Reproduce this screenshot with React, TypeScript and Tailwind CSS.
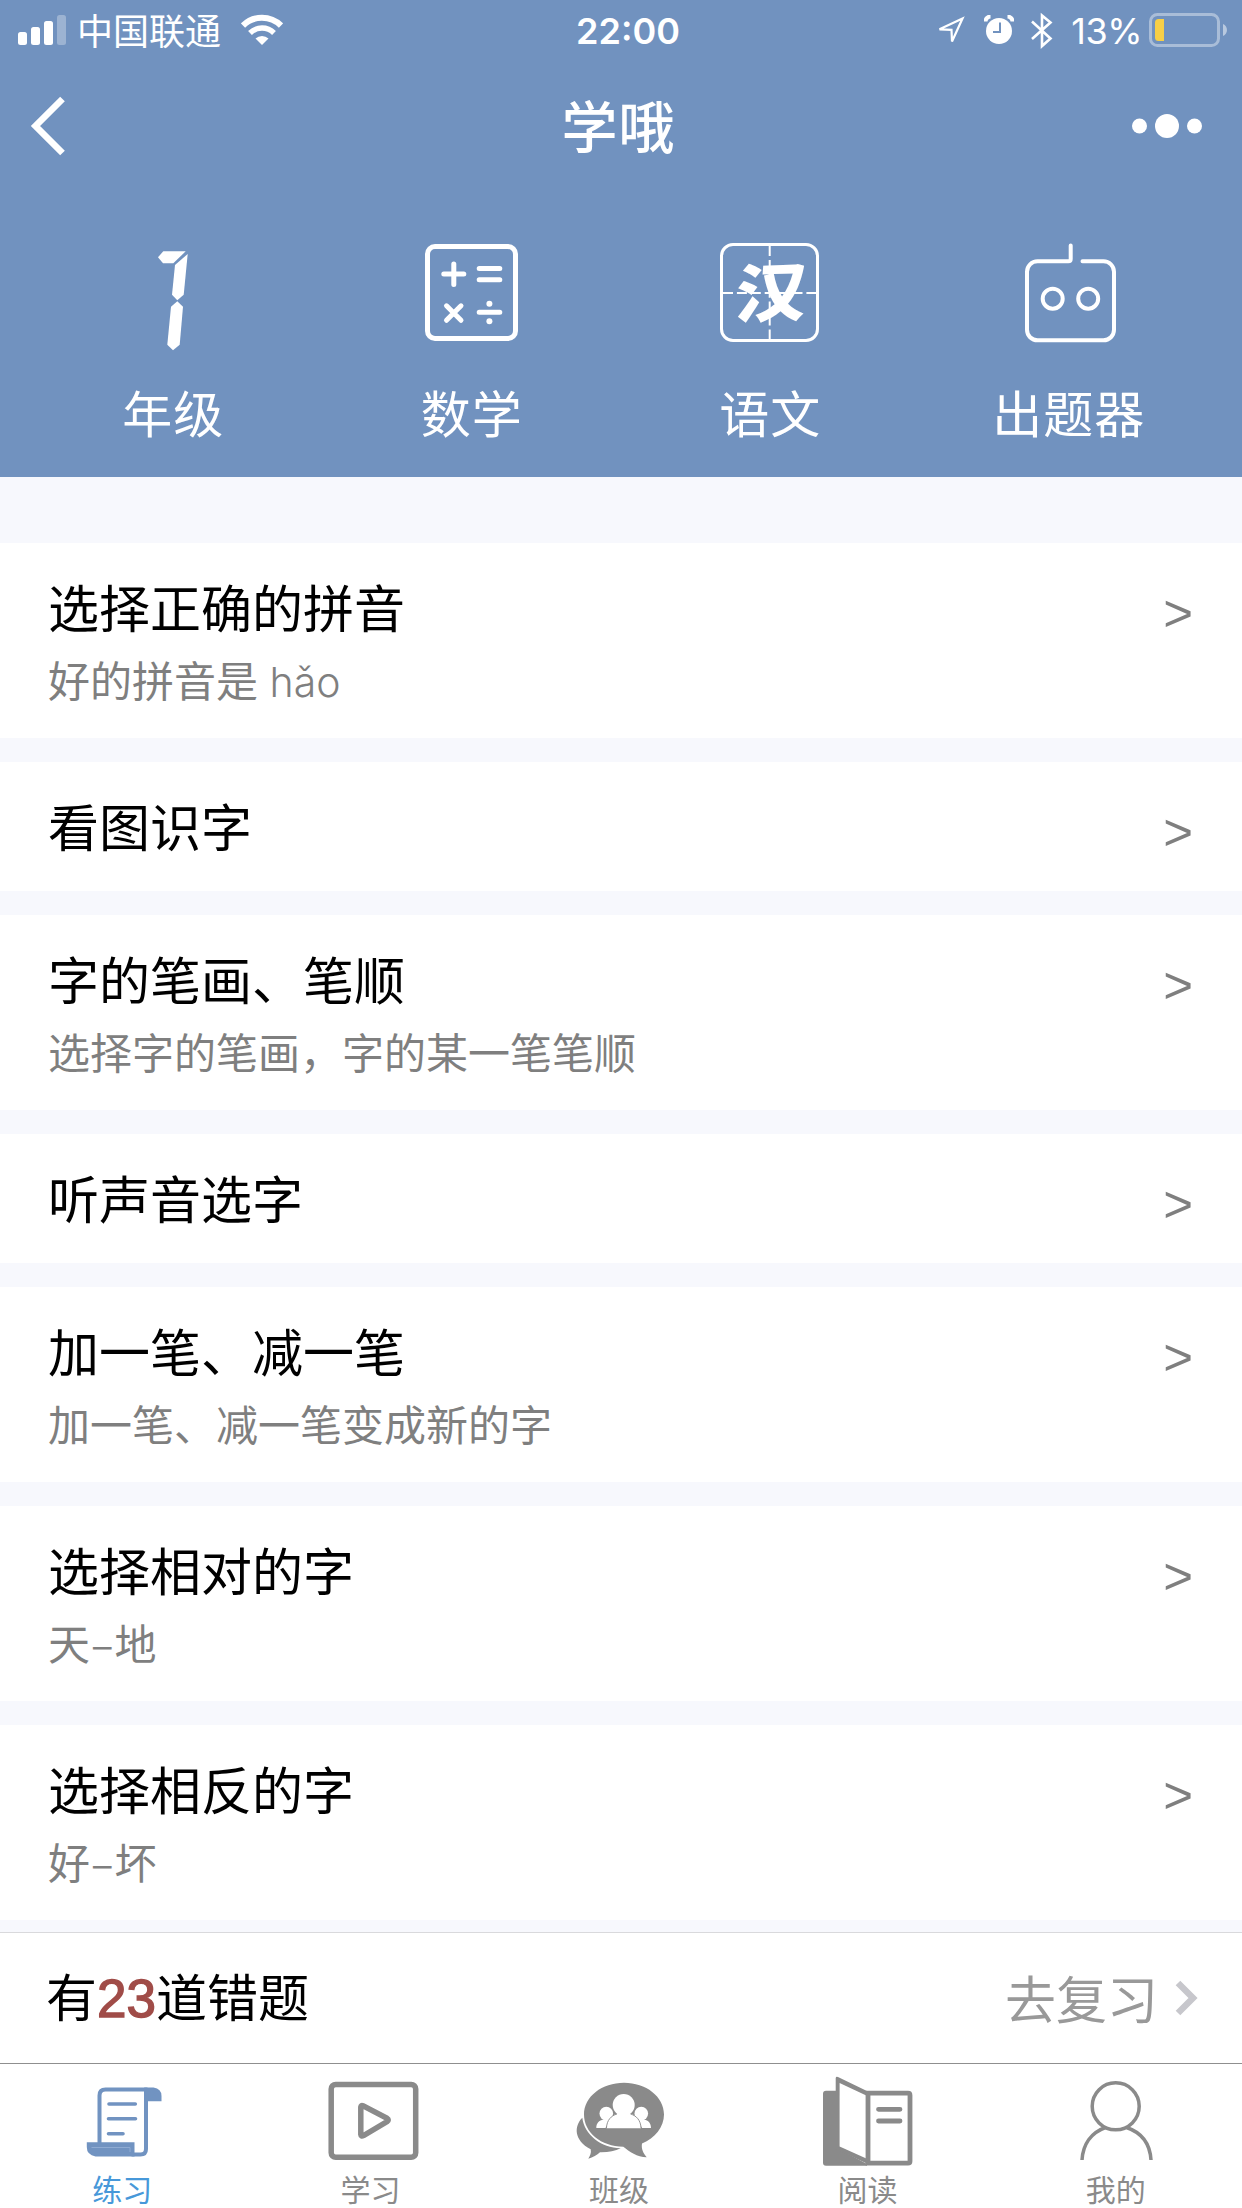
import type { ReactNode } from 'react';

type Exercise = { title: string; desc?: ReactNode };

const exercises: Exercise[] = [
  {
    title: '选择正确的拼音',
    desc: (
      <>
        好的拼音是<span className="font-['Inter'] text-[41px] font-light"> hǎo</span>
      </>
    ),
  },
  { title: '看图识字' },
  { title: '字的笔画、笔顺', desc: '选择字的笔画，字的某一笔笔顺' },
  { title: '听声音选字' },
  { title: '加一笔、减一笔', desc: '加一笔、减一笔变成新的字' },
  { title: '选择相对的字', desc: <>天<span className="px-px">–</span>地</> },
  { title: '选择相反的字', desc: <>好<span className="px-px">–</span>坏</> },
];

function StatusBar() {
  return (
    <div className="grid h-[60px] grid-cols-3">
      <div className="flex items-start pl-[18px]">
        <svg className="mt-[15px] h-[30px] w-12" viewBox="0 0 48 30" fill="#fff">
          <rect x="0" y="17" width="9" height="13" rx="2.5" />
          <rect x="13" y="12" width="9" height="18" rx="2.5" />
          <rect x="26" y="6" width="9" height="24" rx="2.5" />
          <rect x="39" y="0" width="9" height="30" rx="2.5" opacity="0.3" />
        </svg>
        <span className="ml-[11px] mt-1 text-[36px] leading-[50px]">中国联通</span>
        <svg className="ml-5 mt-[14px] h-8 w-[42px]" viewBox="0 0 42 32">
          <path d="M2 11.5a27 27 0 0 1 38 0" fill="none" stroke="#fff" strokeWidth="6" />
          <path d="M9 19a17 17 0 0 1 24 0" fill="none" stroke="#fff" strokeWidth="5.4" />
          <path d="M14.5 24.5a9.5 9.5 0 0 1 13 0L21 31z" fill="#fff" />
        </svg>
      </div>
      <div className="pl-[14px] pt-1.5 text-center font-['Inter'] text-[36px] font-semibold leading-[50px]">22:00</div>
      <div className="flex items-start justify-end pr-[14px]">
        <svg className="mt-[15px] h-8 w-[30px]" viewBox="0 0 30 32" fill="none" stroke="#fff" strokeWidth="2.2">
          <path d="M3.500 14.300L26.500 3.500L16 26.500L15.500 14.800z" />
        </svg>
        <svg className="ml-[18px] mt-[15px] h-[30px] w-[30px]" viewBox="0 0 30 30">
          <circle cx="15" cy="16" r="13" fill="#fff" />
          <path d="M1.500 6.500a5 5 0 0 1 5-5M28.500 6.500a5 5 0 0 0-5-5" stroke="#fff" strokeWidth="4" fill="none" />
          <path d="M16 7.500V17H9" fill="none" stroke="#7192bf" strokeWidth="2" />
        </svg>
        <svg className="ml-4 mt-[12px] h-[38px] w-[24px]" viewBox="0 0 24 38" fill="none" stroke="#fff" strokeWidth="2.6">
          <path d="M2 9.500L20.500 26.500L12 34V3.500L20.500 10.500L2 27" />
        </svg>
        <span className="ml-[17px] pt-1.5 font-['Inter'] text-[36px] leading-[50px] tracking-[-0.5px]">13%</span>
        <svg className="ml-[7px] mt-[13px] h-[34px] w-[79px]" viewBox="0 0 79 34">
          <rect x="1.500" y="1.500" width="68" height="31" rx="7" fill="none" stroke="#fff" strokeOpacity="0.4" strokeWidth="3" />
          <path d="M15 6v22h-5.500a3.500 3.500 0 0 1-3.500-3.500v-15a3.500 3.500 0 0 1 3.500-3.500z" fill="#f7cf47" />
          <path d="M74 11c5.300 2 5.300 10 0 12z" fill="#fff" opacity="0.5" />
        </svg>
      </div>
    </div>
  );
}

function NavBar() {
  return (
    <div className="flex h-[132px] items-center justify-between pl-[27px] pr-[39px]">
      <svg className="h-16 w-11" viewBox="0 0 44 64" fill="none" stroke="#fff" strokeWidth="6.6">
        <path d="M35.500 5L8.500 32L35.500 59" />
      </svg>
      <h1 className="-mr-9 pb-1 text-[56px] font-medium leading-[80px] tracking-[1px]">学哦</h1>
      <svg className="h-6 w-[73px]" viewBox="0 0 73 24" fill="#fff">
        <circle cx="9.500" cy="12" r="7.500" />
        <circle cx="37" cy="12" r="12" />
        <circle cx="64.500" cy="12" r="7.500" />
      </svg>
    </div>
  );
}

function GradeIcon() {
  return (
    <svg className="h-[108px] w-[100px]" viewBox="0 0 100 108" fill="#fff">
      <path d="M35 14.300L40.300 8.300H62.700L50.300 20.300H40z" />
      <path d="M64.700 11L60.700 51.700L54.300 57.300L49 51.700L52 22z" />
      <path d="M54.300 58.300L60 63.700L56.700 101.700L50 107.300L44.300 101.700L48 63.700z" />
    </svg>
  );
}

function MathIcon() {
  return (
    <svg className="h-[108px] w-[100px]" viewBox="1 0 100 108" fill="none" stroke="#fff" strokeWidth="5" strokeLinecap="round">
      <rect x="6.500" y="3.500" width="88" height="92" rx="7.500" />
      <path d="M22.800 31h20M32.800 21v20.500M58.200 25.500h20.600M58.200 36.700h20.600M25.500 62.800l14.500 14.500M40 62.800L25.500 77.300M58.200 69.300h20.600" />
      <circle cx="68.400" cy="60.700" r="3" fill="#fff" stroke="none" />
      <circle cx="68.400" cy="78.300" r="3" fill="#fff" stroke="none" />
    </svg>
  );
}

function ChineseIcon() {
  return (
    <svg className="h-[108px] w-[100px] overflow-visible" viewBox="0 0 100 108">
      <g fill="none" stroke="#fff">
        <rect x="1.500" y="1.500" width="96" height="96" rx="11.500" strokeWidth="3" />
        <path d="M49.700 3v94M3 50h94" strokeWidth="2" strokeDasharray="10 3.900" />
      </g>
      <text x="-34" y="25" fill="#fff" fontSize="68" fontWeight="900" transform="translate(51 50) rotate(-2) skewX(-6) scale(1.04 0.94)">汉</text>
    </svg>
  );
}

function RobotIcon() {
  return (
    <svg className="h-[108px] w-[100px]" viewBox="-1 0 100 108" fill="none" stroke="#fff" strokeWidth="4" strokeLinecap="round">
      <path d="M50.700 2.500V16q0 2.300-2.300 2.300H17.500A10.500 10.500 0 0 0 7 28.800V86.800A10.500 10.500 0 0 0 17.500 97.300H83.500A10.500 10.500 0 0 0 94 86.800V28.800A10.500 10.500 0 0 0 83.500 18.300H62.500" />
      <circle cx="32.700" cy="55.700" r="10" />
      <circle cx="68.200" cy="55.700" r="10" />
    </svg>
  );
}

const subjects: { label: string; icon: ReactNode }[] = [
  { label: '年级', icon: <GradeIcon /> },
  { label: '数学', icon: <MathIcon /> },
  { label: '语文', icon: <ChineseIcon /> },
  { label: '出题器', icon: <RobotIcon /> },
];

function PracticeIcon() {
  return (
    <svg className="h-[90px] w-[100px]" viewBox="0.5 0 100 90" fill="none" stroke="#7193c1" strokeWidth="4">
      <path d="M28 68V19.500Q28 13.500 34 13.500H76M74.500 14V73Q74.500 78.500 69 78.500H60" />
      <path d="M72.700 11.500H82Q90 12.500 90 20V25.300H74.500z" fill="#7193c1" stroke="none" />
      <path d="M15.300 66.300H63V80.500H24Q15.300 79 15.300 71z" fill="#7193c1" stroke="none" />
      <path d="M20 71.500H58.500V76" stroke="#8fabd2" strokeWidth="1" />
      <path d="M37.500 28H63.800M37 42.700H64M37 57.700H51.500" strokeWidth="3.600" strokeLinecap="round" />
    </svg>
  );
}

function StudyIcon() {
  return (
    <svg className="h-[90px] w-[100px]" viewBox="0 0 100 90" fill="none" stroke="#8a8a8a" strokeWidth="5.500" strokeLinejoin="round">
      <rect x="10.200" y="8.500" width="84.500" height="72.800" rx="4.500" />
      <path d="M39.800 31Q40 28.800 42 29.800L66 42.300Q68.500 44 66 45.700L42.500 59.600Q40 60.800 39.800 58.500z" />
    </svg>
  );
}

function ClassIcon() {
  return (
    <svg className="h-[90px] w-[100px]" viewBox="0 0 100 90" fill="#8a8a8a">
      <path d="M13.300 41.700C5 50 4.500 64 21.700 73.300C22.500 77 21 80 19.300 82.700C24 81.500 28 79 31 76.300C39 76.500 46 75 51.700 72.300C32 71.500 15.500 59 13.300 41.700z" />
      <path d="M55 6.700C77 6.700 95 20.500 95 38.500C95 51 86 62 73 67.500C72 73 74.500 77.500 77.700 81.300C68 81 60.500 75.500 54.300 70.700C32 70.500 15 56.500 15 38.500C15 20.500 33 6.700 55 6.700z" />
      <g fill="#fff">
        <circle cx="37.300" cy="37.600" r="6.800" />
        <circle cx="72.300" cy="37.600" r="6.800" />
        <path d="M27.300 52C27.300 47 30 44.500 34.500 43.500H41L36.500 52zM82 52C82 47 79.500 44.500 75 43.500H68.500L73 52z" />
      </g>
      <circle cx="54.700" cy="29" r="11" fill="#fff" />
      <path d="M37.500 52.200C38 44 42 39.500 48.500 37.500H61C67.500 39.500 71.500 44 72 52.200z" fill="#fff" />
      <path d="M37.400 52C38 44 42 39.800 48 38M72.100 52C71.500 44 67.500 39.800 61.500 38" fill="none" stroke="#8a8a8a" strokeWidth="0.900" />
    </svg>
  );
}

function ReadIcon() {
  return (
    <svg className="h-[90px] w-[100px]" viewBox="0 0 100 90">
      <path d="M9 14.700H20V72L50 88V89.700H9Q6 89.700 6 86.700V17.700Q6 14.700 9 14.700z" fill="#8a8a8a" />
      <path d="M18.700 2Q19 0 21 1L52 16V88.500L18.700 73z" fill="#8a8a8a" />
      <path d="M22.600 7L49.300 19.500V82.500L22.600 70.500z" fill="#fff" />
      <path d="M51 17.200H91Q93 17.200 93 19.200V85.200Q93 87.200 91 87.200H51z" fill="none" stroke="#8a8a8a" strokeWidth="4.800" />
      <path d="M61.500 33.300H83M61.500 45H83" stroke="#8a8a8a" strokeWidth="4.800" strokeLinecap="round" />
    </svg>
  );
}

function MineIcon() {
  return (
    <svg className="h-[90px] w-[100px]" viewBox="0.5 0 100 90" fill="none" stroke="#8a8a8a" strokeWidth="3.500">
      <circle cx="50.200" cy="30.300" r="23.500" />
      <path d="M16.500 84C17.500 68 26 56.500 40 51.500M85.500 84C84.500 68 76 56.500 61 51.500" />
    </svg>
  );
}

const tabs: { label: string; icon: ReactNode; active?: boolean }[] = [
  { label: '练习', icon: <PracticeIcon />, active: true },
  { label: '学习', icon: <StudyIcon /> },
  { label: '班级', icon: <ClassIcon /> },
  { label: '阅读', icon: <ReadIcon /> },
  { label: '我的', icon: <MineIcon /> },
];

export default function App() {
  return (
    <div className="flex h-[2208px] w-[1242px] flex-col bg-[#f7f8fd] font-['Noto_Sans_CJK_SC',sans-serif] text-black">
      <header className="h-[477px] shrink-0 bg-[#7192bf] text-white">
        <StatusBar />
        <NavBar />
        <div className="grid grid-cols-4 px-6 pt-[51px]">
          {subjects.map((s) => (
            <div key={s.label} className="flex flex-col items-center">
              {s.icon}
              <span className="mt-6 text-[50px] leading-[72px] tracking-[1px]">{s.label}</span>
            </div>
          ))}
        </div>
      </header>

      <main className="mt-[66px] flex flex-col gap-6">
        {exercises.map((item) => (
          <div key={item.title} className={item.desc ? 'flex h-[195px] bg-white pl-12' : 'flex h-[129px] bg-white pl-12'}>
            <div className="flex-1 pt-[27px]">
              <h2 className="text-[51px] leading-[72px]">{item.title}</h2>
              {item.desc && <p className="mt-[7px] text-[42px] leading-[60px] text-[#7f7f7f]">{item.desc}</p>}
            </div>
            <span className="mr-[49px] mt-[41px] font-['Liberation_Sans'] text-[51px] leading-[60px] text-[#7f7f7f]">&gt;</span>
          </div>
        ))}
      </main>

      <div className="mt-3 flex h-[131px] shrink-0 items-center justify-between border-t border-[#d9d9dc] bg-white pb-0.5 pl-[46px] pr-[43px]">
        <p className="text-[51px] leading-[72px]">
          有
          <span className="font-['Liberation_Sans'] text-[53px] text-[#a04c48] [-webkit-text-stroke:1.4px_#a04c48]">23</span>
          道错题
        </p>
        <div className="flex items-center text-[#999]">
          <span className="text-[51px] leading-[72px]">去复习</span>
          <svg className="ml-[17px] mt-0.5 h-9 w-6" viewBox="0 0 24 36" fill="none" stroke="#c7c7cc" strokeWidth="6.5">
            <path d="M3 3L18 18L3 33" />
          </svg>
        </div>
      </div>

      <nav className="h-[145px] shrink-0 border-t border-[#8f8f8f] bg-white">
        <div className="-ml-0.5 mr-0.5 grid grid-cols-5 pt-3">
          {tabs.map((t) => (
            <div key={t.label} className="flex flex-col items-center">
              {t.icon}
              <span
                className={
                  t.active
                    ? 'mt-0.5 text-[30px] leading-[40px] text-[#4798d9]'
                    : 'mt-0.5 text-[30px] leading-[40px] text-[#8a8a8a]'
                }
              >
                {t.label}
              </span>
            </div>
          ))}
        </div>
      </nav>
    </div>
  );
}
